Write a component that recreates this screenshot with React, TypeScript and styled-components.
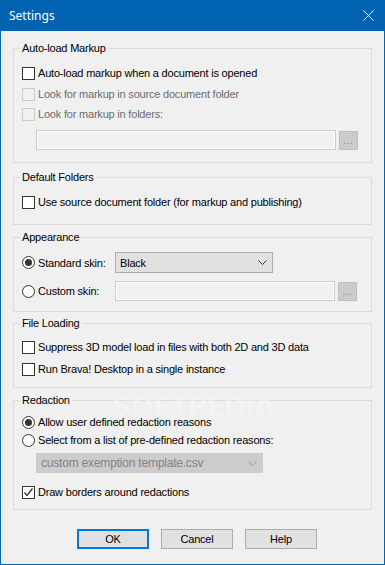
import React from "react";
import styled, { createGlobalStyle } from "styled-components";

const Global = createGlobalStyle`
  html, body { margin: 0; padding: 0; background: #f0f0f0; }
  body { font-family: "Liberation Sans", Arial, sans-serif; font-size: 11px; color: #000; letter-spacing: -0.2px; }
  * { box-sizing: border-box; }
`;

const Window = styled.div`
  position: relative;
  width: 385px;
  height: 565px;
  border: 1px solid #0063b1;
  border-top: none;
  background: #f0f0f0;
  display: flex;
  flex-direction: column;
  overflow: hidden;
`;

const TitleBar = styled.div`
  height: 31px;
  margin: 0 -1px;
  background: #0063b1;
  display: flex;
  align-items: center;
  justify-content: space-between;
  padding: 0 11px 1px 9px;
  flex-shrink: 0;
`;

const Title = styled.span`
  font-family: "Noto Sans", "Open Sans", sans-serif;
  font-size: 12px;
  letter-spacing: 0;
  color: #fff;
`;

const Body = styled.div`
  display: flex;
  flex-direction: column;
  padding: 11px 12px 0 12px;
`;

const Group = styled.fieldset<{ $mt: number; $pt: number; $pb: number }>`
  margin: ${(p) => p.$mt}px 0 0 0;
  padding: ${(p) => p.$pt}px 8px ${(p) => p.$pb}px 8px;
  border: 1px solid #dcdcdc;
  min-inline-size: 0;
  display: flex;
  flex-direction: column;
`;

const Legend = styled.legend`
  font-size: 11px;
  line-height: 13px;
  padding: 0 2px;
  margin-left: -2px;
  color: #000;
`;

const Row = styled.div<{ $mt?: number }>`
  display: flex;
  align-items: center;
  margin-top: ${(p) => p.$mt ?? 0}px;
  height: 13px;
  line-height: 13px;
  white-space: nowrap;
`;

const Box = styled.span<{ $disabled?: boolean }>`
  width: 13px;
  height: 13px;
  flex-shrink: 0;
  border: 1px solid ${(p) => (p.$disabled ? "#cccccc" : "#333333")};
  background: ${(p) => (p.$disabled ? "#f0f0f0" : "#ffffff")};
  display: flex;
  align-items: center;
  justify-content: center;
`;

const Radio = styled.span`
  width: 13px;
  height: 13px;
  flex-shrink: 0;
  border: 1px solid #333333;
  border-radius: 50%;
  background: #fff;
  display: flex;
  align-items: center;
  justify-content: center;
`;

const Dot = styled.span`
  width: 7px;
  height: 7px;
  border-radius: 50%;
  background: #333333;
`;

const Label = styled.span<{ $disabled?: boolean; $w?: number }>`
  margin-left: 3px;
  color: ${(p) => (p.$disabled ? "#6d6d6d" : "#000")};
  width: ${(p) => (p.$w ? `${p.$w}px` : "auto")};
  flex-shrink: 0;
`;

const FieldRow = styled.div<{ $mt: number; $indent: number }>`
  display: flex;
  align-items: center;
  margin-top: ${(p) => p.$mt}px;
  padding-left: ${(p) => p.$indent}px;
  height: 20px;
`;

const TextField = styled.div<{ $w: number }>`
  width: ${(p) => p.$w}px;
  height: 20px;
  border: 1px solid #cccccc;
  box-shadow: inset 0 0 0 1px #ffffff;
  background: #f0f0f0;
  flex-shrink: 0;
`;

const Browse = styled.div`
  width: 19px;
  height: 19px;
  margin-left: 3px;
  margin-top: 1px;
  background: #cccccc;
  border: 1px solid #bfbfbf;
  color: #838383;
  font-size: 10px;
  line-height: 18px;
  text-align: center;
  letter-spacing: 0.5px;
  flex-shrink: 0;
`;

const Combo = styled.div<{ $w: number; $disabled?: boolean }>`
  width: ${(p) => p.$w}px;
  height: ${(p) => (p.$disabled ? 20 : 21)}px;
  background: ${(p) => (p.$disabled ? "#cccccc" : "#e1e1e1")};
  border: 1px solid ${(p) => (p.$disabled ? "#cccccc" : "#adadad")};
  color: ${(p) => (p.$disabled ? "#838383" : "#000")};
  display: flex;
  align-items: center;
  justify-content: space-between;
  padding: 0 5px 0 4px;
  font-size: ${(p) => (p.$disabled ? 12 : 11)}px;
  flex-shrink: 0;
`;

const SkinRow = styled.div<{ $mt: number; $h: number }>`
  display: flex;
  align-items: center;
  margin-top: ${(p) => p.$mt}px;
  height: ${(p) => p.$h}px;
  white-space: nowrap;
`;

const Buttons = styled.div`
  display: flex;
  gap: 12px;
  padding-left: 76px;
  margin-top: 19px;
`;

const Button = styled.div<{ $default?: boolean }>`
  width: 72px;
  height: 20px;
  background: #e1e1e1;
  border: ${(p) => (p.$default ? "2px solid #0078d7" : "1px solid #adadad")};
  display: flex;
  align-items: center;
  justify-content: center;
  font-size: 11px;
`;

const Watermark = styled.div`
  position: absolute;
  left: 111px;
  top: 398px;
  height: 17px;
  line-height: 17px;
  font-family: "DejaVu Sans", sans-serif;
  font-weight: bold;
  font-size: 27px;
  letter-spacing: -1px;
  color: rgba(255, 255, 255, 0.65);
  text-shadow: 0 0 1px rgba(0, 0, 0, 0.07);
  pointer-events: none;
  white-space: nowrap;
  sup { font-size: 8px; font-weight: normal; vertical-align: top; line-height: 8px; position: relative; top: -4px; margin-left: 2px; }
`;

const Chevron = ({ color }: { color: string }) => (
  <svg width="9" height="5" viewBox="0 0 9 5">
    <path d="M0.5 0.5 L4.5 4.5 L8.5 0.5" fill="none" stroke={color} strokeWidth="1" />
  </svg>
);

const Check = () => (
  <svg width="11" height="11" viewBox="0 0 11 11">
    <path d="M1.5 5.5 L4 8.5 L9.5 1.5" fill="none" stroke="#333" strokeWidth="1.3" />
  </svg>
);

const CloseIcon = () => (
  <svg width="11" height="11" viewBox="0 0 11 11">
    <path d="M0.5 0.5 L10.5 10.5 M10.5 0.5 L0.5 10.5" stroke="#fff" strokeWidth="1" />
  </svg>
);

export default function App() {
  return (
    <>
      <Global />
      <Window>
        <TitleBar>
          <Title>Settings</Title>
          <CloseIcon />
        </TitleBar>
        <Body>
          <Group $mt={0} $pt={12} $pb={12}>
            <Legend>Auto-load Markup</Legend>
            <Row>
              <Box />
              <Label>Auto-load markup when a document is opened</Label>
            </Row>
            <Row $mt={8}>
              <Box $disabled />
              <Label $disabled>Look for markup in source document folder</Label>
            </Row>
            <Row $mt={7}>
              <Box $disabled />
              <Label $disabled>Look for markup in folders:</Label>
            </Row>
            <FieldRow $mt={9} $indent={14}>
              <TextField $w={300} />
              <Browse>...</Browse>
            </FieldRow>
          </Group>

          <Group $mt={8} $pt={12} $pb={15}>
            <Legend>Default Folders</Legend>
            <Row>
              <Box />
              <Label>Use source document folder (for markup and publishing)</Label>
            </Row>
          </Group>

          <Group $mt={6} $pt={8} $pb={10}>
            <Legend>Appearance</Legend>
            <SkinRow $mt={0} $h={21}>
              <Radio>
                <Dot />
              </Radio>
              <Label $w={77}>Standard skin:</Label>
              <Combo $w={158}>
                <span>Black</span>
                <Chevron color="#333" />
              </Combo>
            </SkinRow>
            <SkinRow $mt={8} $h={20}>
              <Radio />
              <Label $w={77}>Custom skin:</Label>
              <TextField $w={220} />
              <Browse>...</Browse>
            </SkinRow>
          </Group>

          <Group $mt={5} $pt={11} $pb={11}>
            <Legend>File Loading</Legend>
            <Row>
              <Box />
              <Label>Suppress 3D model load in files with both 2D and 3D data</Label>
            </Row>
            <Row $mt={9}>
              <Box />
              <Label>Run Brava! Desktop in a single instance</Label>
            </Row>
          </Group>

          <Group $mt={6} $pt={9} $pb={10}>
            <Legend>Redaction</Legend>
            <Row>
              <Radio>
                <Dot />
              </Radio>
              <Label>Allow user defined redaction reasons</Label>
            </Row>
            <Row $mt={5}>
              <Radio />
              <Label>Select from a list of pre-defined redaction reasons:</Label>
            </Row>
            <FieldRow $mt={6} $indent={14}>
              <Combo $w={227} $disabled>
                <span>custom exemption template.csv</span>
                <Chevron color="#9a9a9a" />
              </Combo>
            </FieldRow>
            <Row $mt={13}>
              <Box>
                <Check />
              </Box>
              <Label>Draw borders around redactions</Label>
            </Row>
          </Group>
        </Body>
        <Buttons>
          <Button $default>OK</Button>
          <Button>Cancel</Button>
          <Button>Help</Button>
        </Buttons>
        <Watermark>
          SOFTPEDIA<sup>®</sup>
        </Watermark>
      </Window>
    </>
  );
}
